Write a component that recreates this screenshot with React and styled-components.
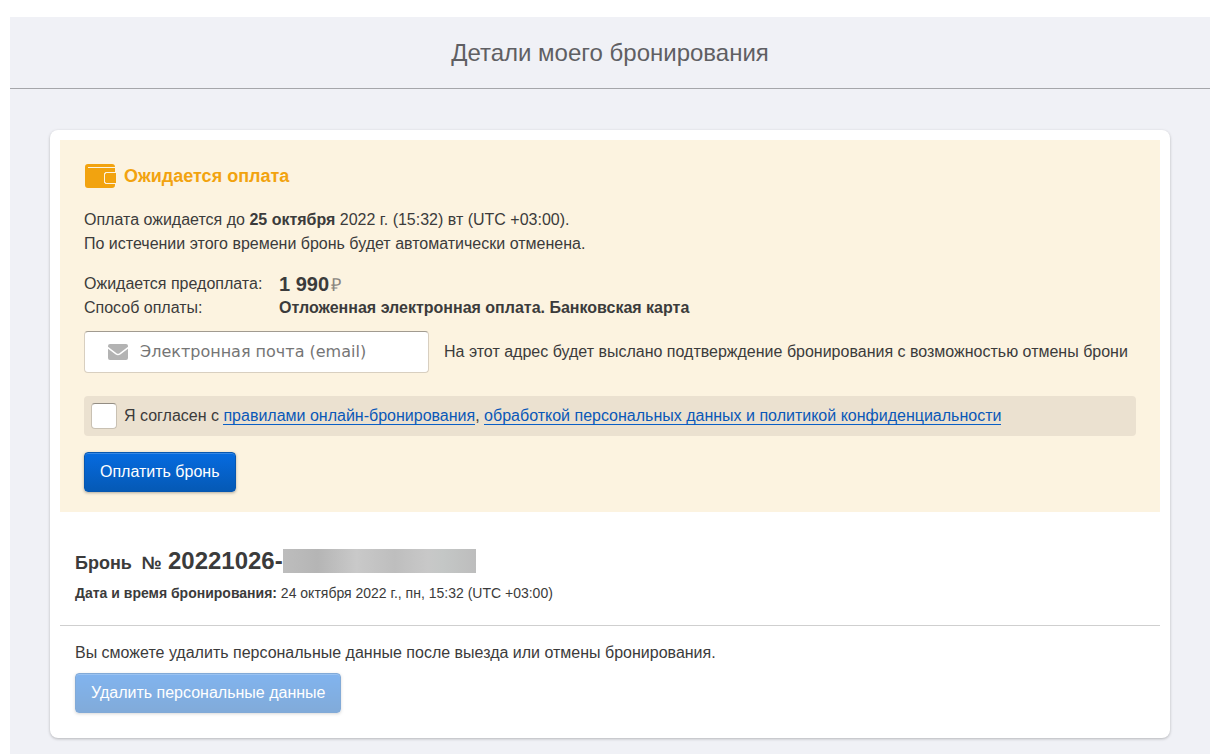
import React, { useState } from 'react'
import styled, { createGlobalStyle } from 'styled-components'

const GlobalStyle = createGlobalStyle`
  *, *::before, *::after {
    box-sizing: border-box;
  }
  body {
    margin: 0;
    background: #fff;
    color: #3b3b3b;
    font: 16px/24px "Liberation Sans", Arial, sans-serif;
  }
`

const Page = styled.div`
  margin: 17px 13px 0 10px;
  background: #f0f1f6;
`
const Header = styled.header`
  padding: 20px;
  border-bottom: 1px solid #a5a6aa;
  text-align: center;
`
const PageTitle = styled.h1`
  margin: 0;
  color: #5f5f63;
  font-size: 24px;
  font-weight: normal;
  line-height: 31px;
`
const Main = styled.main`
  padding: 41px 40px 16px;
`
const Card = styled.div`
  padding: 10px 10px 25px;
  background: #fff;
  border-radius: 8px;
  box-shadow: 0 1px 3px rgba(0, 0, 0, 0.25);
`
const Payment = styled.form`
  padding: 24px 24px 20px;
  background: #fcf3e0;
`
const PaymentTitle = styled.h2`
  display: flex;
  align-items: center;
  gap: 7px;
  margin: 0 0 20px;
  color: #f2a30f;
  font-size: 18px;
  line-height: 24px;
`
const Text = styled.p`
  margin: 0;
`
const Details = styled.dl`
  display: grid;
  grid-template-columns: 195px 1fr;
  grid-auto-rows: 24px;
  margin: 16px 0 11px;
`
const Term = styled.dt``
const Value = styled.dd`
  display: flex;
  align-items: baseline;
  gap: 2px;
  margin: 0;
  font-weight: bold;
`
const Price = styled.span`
  font-size: 20px;
`
const Currency = styled.span`
  color: #8b8680;
  font-size: 18px;
  font-weight: normal;
`
const EmailRow = styled.div`
  display: flex;
  align-items: center;
  gap: 15px;
`
const EmailField = styled.label`
  display: flex;
  align-items: center;
  gap: 12px;
  flex: 0 0 345px;
  height: 42px;
  padding: 0 23px;
  background: #fff;
  border: 1px solid #d8cfc0;
  border-top-color: #a19b90;
  border-radius: 4px;
`
const EmailInput = styled.input`
  flex: 1;
  min-width: 0;
  padding: 0;
  border: 0;
  outline: 0;
  background: none;
  color: #3b3b3b;
  font: 16px/24px "DejaVu Sans", sans-serif;

  &::placeholder {
    color: #757575;
    opacity: 1;
  }
`
const Agreement = styled.div`
  display: flex;
  align-items: center;
  gap: 7px;
  min-height: 40px;
  margin: 23px 0 16px;
  padding: 0 7px;
  background: #ebe1d0;
  border-radius: 4px;
`
const Checkbox = styled.input`
  appearance: none;
  flex: none;
  width: 26px;
  height: 26px;
  margin: 0;
  background: #fff;
  border: 1px solid #c9c1b3;
  border-top-color: #938d83;
  border-radius: 4px;

  &:checked {
    background: #0560cf;
    box-shadow: inset 0 0 0 5px #fff;
  }
`
const Link = styled.a`
  color: #0a58b8;
  text-decoration: none;
  border-bottom: 1px solid #0a5fc6;
`
const Button = styled.button`
  display: block;
  height: 40px;
  padding: 0 15px;
  border: 1px solid #0757b0;
  border-radius: 4px;
  background: linear-gradient(#066be0, #0559b5);
  box-shadow: 0 1px 3px rgba(0, 0, 0, 0.3), inset 0 1px 0 rgba(255, 255, 255, 0.2);
  color: #fff;
  font: inherit;
  cursor: pointer;

  &:disabled {
    opacity: 0.5;
    cursor: default;
  }
`
const Booking = styled.section`
  padding: 36px 15px 22px;
  border-bottom: 1px solid #cfcfcf;
`
const BookingTitle = styled.h2`
  display: flex;
  align-items: baseline;
  margin: 0 0 7px;
  font-size: 18px;
  line-height: 25px;
`
const BookingNumber = styled.span`
  margin-left: 6px;
  font-size: 24px;
`
const HiddenPart = styled.span`
  align-self: flex-start;
  width: 193px;
  height: 24px;
  margin-top: 1px;
  background: linear-gradient(90deg, #bdbdbd, #b5b5b5 18%, #c9c9c9 38%, #bebebe 58%, #c8c8c8 75%, #c4c7c6 83%, #bdbdbd);
`
const BookingDate = styled.p`
  margin: 0;
  font-size: 14px;
  line-height: 20px;
`
const Personal = styled.section`
  padding: 15px 15px 0;
`
const PersonalText = styled(Text)`
  margin-bottom: 8px;
`

const WalletIcon = () => (
  <svg width="33" height="24" viewBox="0 0 33 24" aria-hidden="true">
    <path
      d="M4 0h24q3 0 3 3v5h-8q-3 0-3 3v6q0 3 3 3h8v1q0 3-3 3H4q-3 0-3-3V3q0-3 3-3z"
      fill="#f2a30f"
    />
    <path d="M4 3.5h27" stroke="#fcf3e0" />
    <path d="M22.5 9H32v10h-9.500q-1.500 0-1.500-1.500v-7q0-1.500 1.500-1.500z" fill="#f2a30f" />
    <path d="M32 8.500h-9.500q-2 0-2 2v7q0 2 2 2H31" fill="none" stroke="#fcf3e0" />
  </svg>
)

const MailIcon = () => (
  <svg width="20" height="16" viewBox="0 0 20 16" aria-hidden="true">
    <path d="M2 0h16q2 0 2 2v.8l-8.500 6.500q-1.500 1-3 0L0 2.800V2q0-2 2-2z" fill="#b3b3b3" />
    <path d="M0 4.800l7.700 5.800q2.300 1.500 4.600 0L20 4.800V14q0 2-2 2H2q-2 0-2-2z" fill="#b3b3b3" />
  </svg>
)

const PaymentForm = () => {
  const [email, setEmail] = useState('')
  const [agreed, setAgreed] = useState(false)

  return (
    <Payment onSubmit={(e) => e.preventDefault()}>
      <PaymentTitle>
        <WalletIcon />
        Ожидается оплата
      </PaymentTitle>
      <Text>
        Оплата ожидается до <b>25 октября</b> 2022 г. (15:32) вт (UTC +03:00).
      </Text>
      <Text>По истечении этого времени бронь будет автоматически отменена.</Text>
      <Details>
        <Term>Ожидается предоплата:</Term>
        <Value>
          <Price>1 990</Price>
          <Currency>₽</Currency>
        </Value>
        <Term>Способ оплаты:</Term>
        <Value>Отложенная электронная оплата. Банковская карта</Value>
      </Details>
      <EmailRow>
        <EmailField htmlFor="email">
          <MailIcon />
          <EmailInput
            id="email"
            type="email"
            aria-label="Электронная почта (email)"
            placeholder="Электронная почта (email)"
            value={email}
            onChange={(e) => setEmail(e.target.value)}
          />
        </EmailField>
        <Text>На этот адрес будет выслано подтверждение бронирования с возможностью отмены брони</Text>
      </EmailRow>
      <Agreement>
        <Checkbox
          id="agree"
          type="checkbox"
          checked={agreed}
          onChange={(e) => setAgreed(e.target.checked)}
        />
        <label htmlFor="agree">
          Я согласен с <Link href="#rules">правилами онлайн-бронирования</Link>,{' '}
          <Link href="#privacy">обработкой персональных данных и политикой конфиденциальности</Link>
        </label>
      </Agreement>
      <Button type="submit">Оплатить бронь</Button>
    </Payment>
  )
}

const App = () => {
  return (
    <>
      <GlobalStyle />
      <Page>
        <Header>
          <PageTitle>Детали моего бронирования</PageTitle>
        </Header>
        <Main>
          <Card>
            <PaymentForm />
            <Booking>
              <BookingTitle>
                Бронь&nbsp; №
                <BookingNumber>20221026-</BookingNumber>
                <HiddenPart />
              </BookingTitle>
              <BookingDate>
                <b>Дата и время бронирования:</b> 24 октября 2022 г., пн, 15:32 (UTC +03:00)
              </BookingDate>
            </Booking>
            <Personal>
              <PersonalText>
                Вы сможете удалить персональные данные после выезда или отмены бронирования.
              </PersonalText>
              <Button type="button" disabled>Удалить персональные данные</Button>
            </Personal>
          </Card>
        </Main>
      </Page>
    </>
  )
}

export default App
